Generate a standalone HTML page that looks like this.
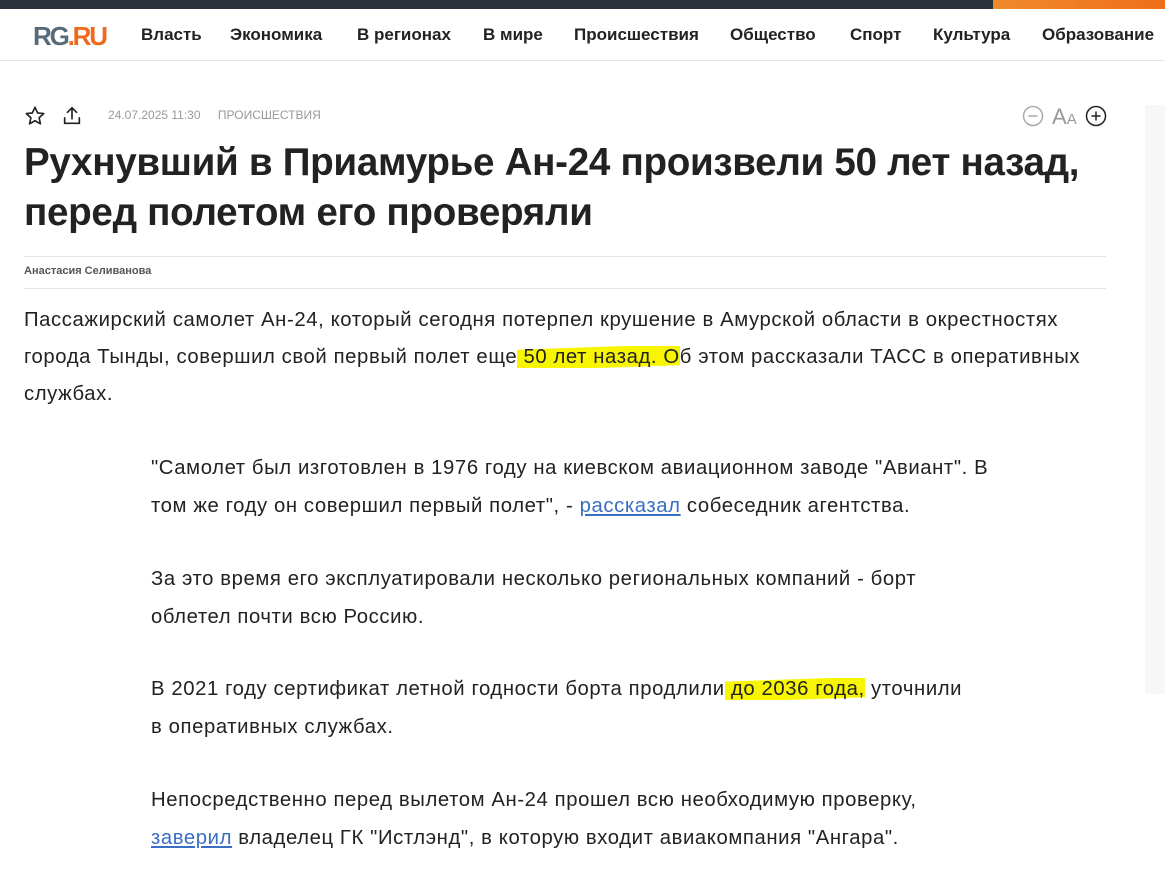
<!DOCTYPE html>
<html><head><meta charset="utf-8"><style>
*{margin:0;padding:0;box-sizing:border-box}
body{width:1165px;height:880px;overflow:hidden;background:#fff;font-family:"Liberation Sans",sans-serif;color:#222;position:relative}
.top{position:absolute;left:0;top:0;width:1165px;height:9px;background:#2b323b}
.top .o{position:absolute;left:993px;top:0;right:0;height:9px;background:linear-gradient(90deg,#f08a2c,#ee6f1a)}
.hdr{position:absolute;top:9px;left:0;width:1165px;height:52px;border-bottom:1px solid #e6e6e6}
.logo{position:absolute;left:33px;top:12px;font-weight:bold;font-size:26px;letter-spacing:-2.2px}
.logo .a{color:#566a7a}.logo .b{color:#ef6a1f}
.nav{position:absolute;left:141px;top:16px;font-size:17px;font-weight:bold;color:#222;white-space:nowrap}
.nav span{position:absolute;top:0}
.meta{position:absolute;top:108px;left:108px;font-size:12px;color:#999}
h1{position:absolute;left:24px;top:138px;width:1100px;font-size:38.6px;line-height:50px;font-weight:bold;color:#222;letter-spacing:-0.3px;white-space:nowrap}
.auth{position:absolute;left:24px;top:256px;width:1082px;border-top:1px solid #e6e6e6;border-bottom:1px solid #e6e6e6;height:33px;font-size:11px;font-weight:bold;color:#555;padding-top:8px}
.p{position:absolute;font-size:20.3px;line-height:37px;color:#222;white-space:nowrap;letter-spacing:0.6px}
.hl{background:linear-gradient(178deg,transparent 12%,#f7f500 15%,#f7f500 88%,transparent 92%)}
a{color:#3a6ec4}
.side{position:absolute;left:1145px;top:105px;width:20px;height:589px;background:#f7f7f7}
</style></head><body>
<div class="top"><div class="o"></div></div>
<div class="hdr">
<div class="logo"><span class="a">RG</span><span class="b">.RU</span></div>
<div class="nav">
<span style="left:0">Власть</span><span style="left:89px">Экономика</span><span style="left:216px">В регионах</span><span style="left:342px">В мире</span><span style="left:433px">Происшествия</span><span style="left:589px">Общество</span><span style="left:709px">Спорт</span><span style="left:792px">Культура</span><span style="left:901px">Образование</span>
</div></div>
<svg style="position:absolute;left:24px;top:105px" width="22" height="22" viewBox="0 0 24 24" fill="none" stroke="#222" stroke-width="1.8" stroke-linejoin="round"><path d="M12 2.5l2.9 6.2 6.6.7-5 4.5 1.4 6.6L12 17.2l-5.9 3.3 1.4-6.6-5-4.5 6.6-.7z"/></svg>
<svg style="position:absolute;left:61px;top:105px" width="22" height="22" viewBox="0 0 24 24" fill="none" stroke="#222" stroke-width="1.8" stroke-linecap="round"><path d="M12 15V3M7 8l5-5 5 5M4 14v6h16v-6"/></svg>
<div class="meta">24.07.2025 11:30 <span style="margin-left:14px">ПРОИСШЕСТВИЯ</span></div>
<svg style="position:absolute;left:1022px;top:105px" width="22" height="22" viewBox="0 0 22 22" fill="none" stroke="#aaa" stroke-width="1.5"><circle cx="11" cy="11" r="9.5"/><path d="M6.5 11h9"/></svg>
<div style="position:absolute;left:1052px;top:104px;font-size:22px;color:#999">A<span style="font-size:15px">A</span></div>
<svg style="position:absolute;left:1085px;top:105px" width="22" height="22" viewBox="0 0 22 22" fill="none" stroke="#222" stroke-width="1.5"><circle cx="11" cy="11" r="9.5"/><path d="M6.5 11h9M11 6.5v9"/></svg>
<div class="side"></div>
<h1>Рухнувший в Приамурье Ан-24 произвели 50 лет назад,<br>перед полетом его проверяли</h1>
<div class="auth">Анастасия Селиванова</div>
<div class="p" style="left:24px;top:302px">Пассажирский самолет Ан-24, который сегодня потерпел крушение в Амурской области в окрестностях<br>города Тынды, совершил свой первый полет еще<span class="hl"> 50 лет назад. О</span>б этом рассказали ТАСС в оперативных<br>службах.</div>
<div class="p" style="left:151px;top:449px;line-height:38px">"Самолет был изготовлен в 1976 году на киевском авиационном заводе "Авиант". В<br>том же году он совершил первый полет", - <a href="#">рассказал</a> собеседник агентства.</div>
<div class="p" style="left:151px;top:560px;line-height:38px">За это время его эксплуатировали несколько региональных компаний - борт<br>облетел почти всю Россию.</div>
<div class="p" style="left:151px;top:670px;line-height:38px">В 2021 году сертификат летной годности борта продлили<span class="hl"> до 2036 года,</span> уточнили<br>в оперативных службах.</div>
<div class="p" style="left:151px;top:781px;line-height:38px">Непосредственно перед вылетом Ан-24 прошел всю необходимую проверку,<br><a href="#">заверил</a> владелец ГК "Истлэнд", в которую входит авиакомпания "Ангара".</div>
</body></html>
